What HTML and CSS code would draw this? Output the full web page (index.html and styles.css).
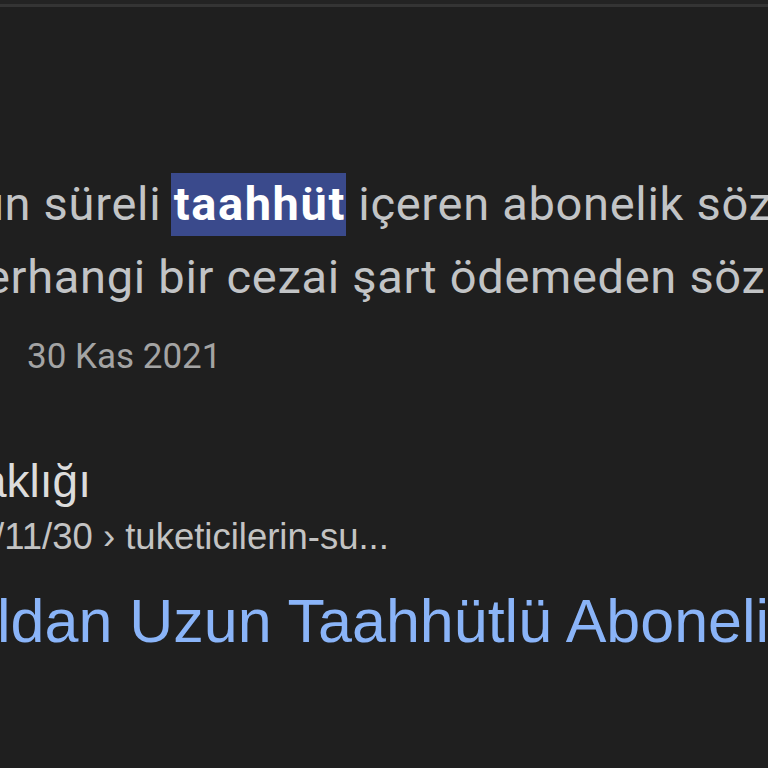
FILE: index.html
```html
<!DOCTYPE html>
<html lang="tr">
<head>
<meta charset="utf-8">
<title>Arama sonucu</title>
<link rel="stylesheet" href="styles.css">
</head>
<body>
<div class="page">
  <div class="topbar"></div>
  <div class="snippet">
    <div class="snip-line l1">un süreli <em class="hl">taahhüt</em> içeren abonelik sözleşmelerini</div>
    <div class="snip-line l2">erhangi bir cezai şart ödemeden sözleşmeyi</div>
    <div class="date">30 Kas 2021</div>
  </div>
  <div class="result">
    <div class="site">aklığı</div>
    <div class="cite">/11/30 › tuketicilerin-su...</div>
    <div class="title">ldan Uzun Taahhütlü Abonelik Sözleşmeleri</div>
  </div>
</div>
</body>
</html>
```
FILE: styles.css
```css
html, body {
  margin: 0;
  padding: 0;
  background: #1f1f1f;
}
.page {
  width: 768px;
  height: 768px;
  overflow: hidden;
  background: #1f1f1f;
  white-space: nowrap;
}
.topbar {
  height: 4px;
  background: #232323;
  border-bottom: 3px solid #343434;
}
.snippet {
  padding-top: 160px;
  font-family: Roboto, "Noto Sans", sans-serif;
  color: #c2c4c6;
}
.snip-line {
  font-size: 47px;
  line-height: 73px;
  letter-spacing: 0.7px;
}
.l1 { text-indent: -22px; }
.l2 { text-indent: -15px; }
.hl {
  font-style: normal;
  font-weight: 700;
  color: #ffffff;
  background: #3a4a8c;
  letter-spacing: 1.6px;
  padding: 3px 0 5px 3px;
  margin-left: -3px;
}
.date {
  font-size: 35px;
  line-height: 60px;
  color: #a4a4a4;
  padding-left: 27px;
  margin-top: 14px;
}
.result {
  font-family: "Liberation Sans", Arial, sans-serif;
  margin-top: 66px;
}
.site {
  font-size: 46px;
  line-height: 56px;
  color: #dcdcdc;
  text-indent: -19px;
}
.cite {
  font-size: 36.5px;
  line-height: 56px;
  color: #c3c3c3;
  text-indent: -6px;
}
.title {
  font-size: 61px;
  line-height: 80px;
  color: #8ab4f8;
  margin-top: 16px;
  text-indent: -3px;
}
```
